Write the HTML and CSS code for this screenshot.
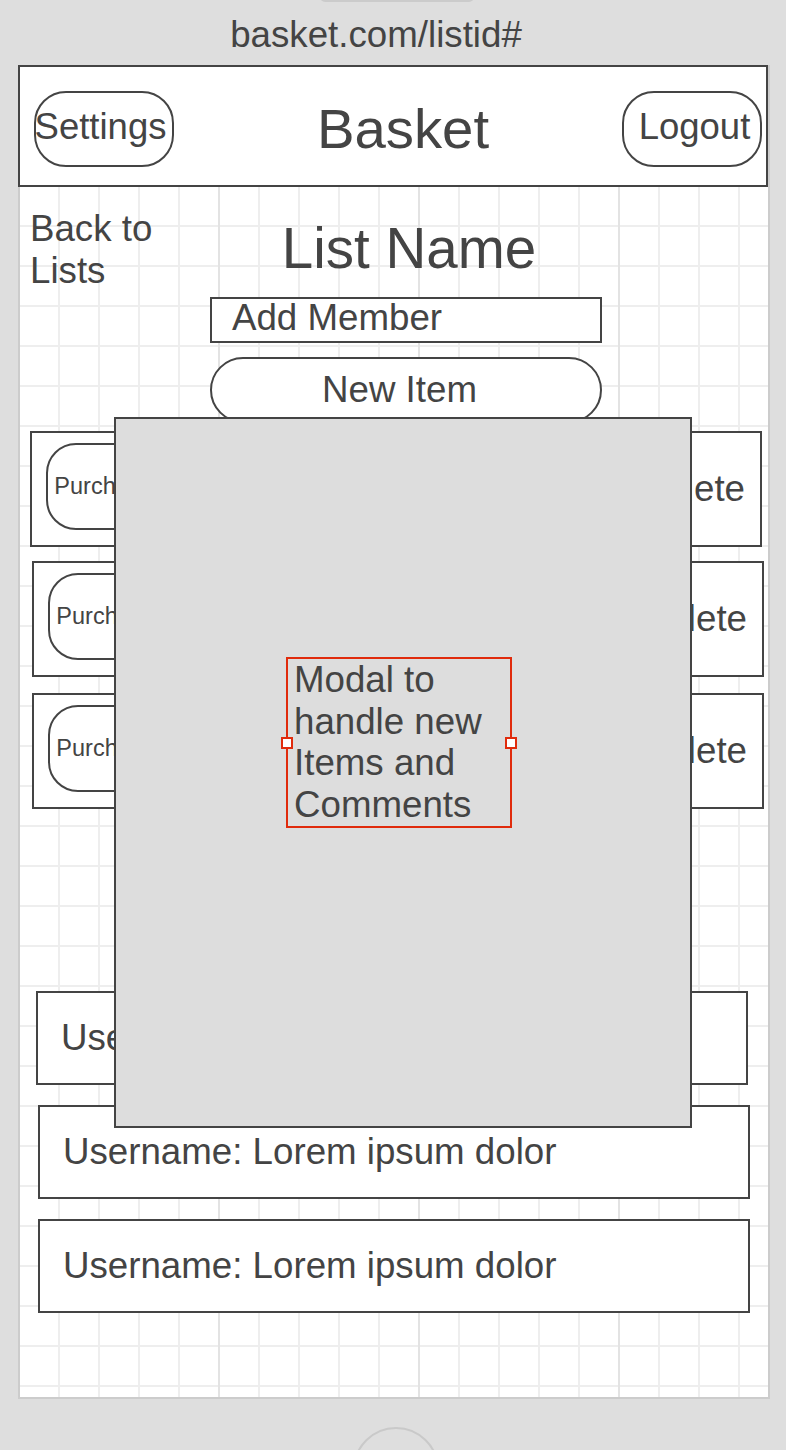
FILE: index.html
```html
<!DOCTYPE html>
<html lang="en">
<head>
<meta charset="utf-8">
<title>Basket - List</title>
<link rel="stylesheet" href="styles.css">
</head>
<body>
<div class="device">
  <div class="speaker"></div>
  <div class="url">basket.com/listid#</div>
  <div class="screen">
    <header class="topbar">
      <div class="pill pill-settings">Settings</div>
      <div class="brand">Basket</div>
      <div class="pill pill-logout">Logout</div>
    </header>

    <section class="list-head">
      <div class="back">Back to<br>Lists</div>
      <div class="list-controls">
        <div class="list-name">List Name</div>
        <div class="add-member">Add Member</div>
        <div class="new-item">New Item</div>
      </div>
    </section>

    <div class="items">
      <div class="item item-first">
        <div class="purchase">Purchase</div>
        <div class="delete">Delete</div>
      </div>
      <div class="item item-second">
        <div class="purchase">Purchase</div>
        <div class="delete">Delete</div>
      </div>
      <div class="item item-third">
        <div class="purchase">Purchase</div>
        <div class="delete">Delete</div>
      </div>
    </div>

    <div class="comments">
      <div class="comment comment-first">Username: Lorem ipsum dolor</div>
      <div class="comment">Username: Lorem ipsum dolor</div>
      <div class="comment">Username: Lorem ipsum dolor</div>
    </div>

    <div class="modal">
      <div class="selection">
        <span class="handle handle-left"></span>
        <span class="handle handle-right"></span>
        Modal to handle new Items and Comments
      </div>
    </div>
  </div>
  <div class="home"></div>
</div>
</body>
</html>
```

FILE: styles.css
```css
* { box-sizing: border-box; }

html, body {
  margin: 0;
  padding: 0;
}

body {
  width: 786px;
  height: 1450px;
  overflow: hidden;
  background: #dedede;
  color: #444;
  font-family: "Liberation Sans", Arial, sans-serif;
  font-size: 36.7px;
}

.device {
  width: 786px;
  height: 1450px;
  overflow: hidden;
}

.speaker {
  width: 154px;
  height: 10px;
  margin: -8px 0 0 320px;
  border: 2px solid #cbcbcb;
  border-radius: 8px;
}

.url {
  margin-top: 12px;
  padding-right: 34px;
  height: 42px;
  line-height: 42px;
  font-size: 36.7px;
  text-align: center;
  white-space: nowrap;
}

.screen {
  position: relative;
  margin: 9px 0 0 18px;
  width: 752px;
  height: 1334px;
  border: 2px solid #cccccc;
  border-top: 0;
  background-color: #ffffff;
  background-image:
    linear-gradient(to right, #e3e3e3 2px, transparent 2px),
    linear-gradient(to right, #eeeeee 2px, transparent 2px),
    linear-gradient(to bottom, #eeeeee 2px, transparent 2px);
  background-size: 200px 100%, 40px 100%, 100% 40px;
  background-position: 198px 0, 38px 0, 0 0;
}

/* header */
.topbar {
  display: flex;
  align-items: flex-start;
  margin-left: -2px;
  width: 750px;
  height: 122px;
  padding: 24px 4px 0 14px;
  border: 2px solid #444;
  background: #fff;
}

.pill {
  flex: none;
  display: flex;
  align-items: center;
  justify-content: center;
  width: 140px;
  height: 76px;
  border: 2px solid #444;
  border-radius: 32px;
  font-size: 36.5px;
  white-space: nowrap;
  padding-bottom: 4px;
}

.pill-settings { padding-right: 7px; }
.pill-logout { padding-left: 5px; }

.brand {
  flex: 1;
  margin-top: 6px;
  padding-left: 10px;
  text-align: center;
  font-size: 56.3px;
  line-height: 64px;
}

/* list head */
.list-head {
  display: flex;
  align-items: flex-start;
}

.back {
  width: 190px;
  flex: none;
  padding: 21px 0 0 10px;
  line-height: 42px;
}

.list-controls {
  width: 392px;
  flex: none;
}

.list-name {
  margin-top: 30px;
  padding-left: 6px;
  text-align: center;
  font-size: 56.5px;
  line-height: 64px;
}

.add-member {
  margin-top: 16px;
  height: 46px;
  padding-left: 20px;
  border: 2px solid #444;
  background: #fff;
  line-height: 38px;
}

.new-item {
  margin-top: 14px;
  height: 66px;
  padding-right: 13px;
  border: 2px solid #444;
  border-radius: 33px;
  background: #fff;
  text-align: center;
  line-height: 62px;
}

/* items */
.items {
  margin-top: 8px;
  padding-left: 10px;
}

.item {
  display: flex;
  align-items: center;
  justify-content: space-between;
  width: 732px;
  height: 116px;
  padding: 0 15px 5px 14px;
  border: 2px solid #444;
  background: #fff;
}

.item-second {
  margin: 14px 0 0 2px;
}

.item-third {
  margin: 16px 0 0 2px;
}

.purchase {
  display: flex;
  align-items: center;
  justify-content: center;
  width: 116px;
  height: 87px;
  border: 2px solid #444;
  border-radius: 30px;
  font-size: 23.5px;
  white-space: nowrap;
}

.delete {
  padding-top: 5px;
}

/* comments */
.comments {
  margin-top: 182px;
  padding-left: 16px;
}

.comment {
  display: flex;
  align-items: center;
  margin: 20px 0 0 2px;
  width: 712px;
  height: 94px;
  padding-left: 23px;
  border: 2px solid #444;
  background: #fff;
  white-space: nowrap;
}

.comment-first {
  margin: 0;
}

/* modal overlay */
.modal {
  position: absolute;
  left: 94px;
  top: 352px;
  width: 578px;
  height: 711px;
  padding: 238px 0 0 170px;
  border: 2px solid #444;
  background: #dddddd;
}

.selection {
  position: relative;
  width: 226px;
  height: 171px;
  padding-left: 6px;
  border: 2px solid #e02b0c;
  line-height: 41.5px;
}

.handle {
  position: absolute;
  top: 50%;
  margin-top: -6px;
  width: 12px;
  height: 12px;
  border: 2px solid #e02b0c;
  background: #fff;
}

.handle-left { left: -7px; }
.handle-right { right: -7px; }

/* home button */
.home {
  margin: 28px 0 0 353px;
  width: 86px;
  height: 86px;
  border: 2px solid #c9c9c9;
  border-radius: 50%;
}
```
